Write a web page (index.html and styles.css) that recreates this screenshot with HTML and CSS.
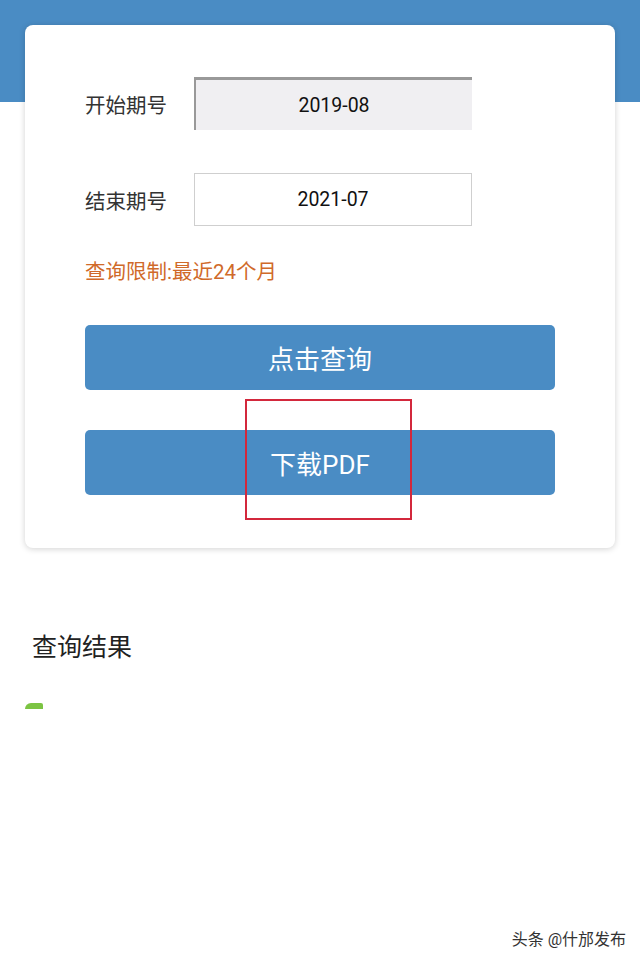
FILE: index.html
```html
<!DOCTYPE html>
<html lang="zh-CN">
<head>
    <meta charset="UTF-8">
    <meta name="viewport" content="width=device-width, initial-scale=1.0">
    <title>查询</title>
    <link rel="stylesheet" href="styles.css">
</head>
<body>
    <div class="header"></div>
    <div class="card">
        <div class="row">
            <label for="start">开始期号</label>
            <input type="text" id="start" class="field field-locked" value="2019-08" readonly>
        </div>
        <div class="row">
            <label for="end">结束期号</label>
            <input type="text" id="end" class="field" value="2021-07">
        </div>
        <p class="limit">查询限制:最近24个月</p>
        <button class="btn">点击查询</button>
        <button class="btn btn-pdf">下载PDF</button>
        <div class="mark"></div>
    </div>

    <h2 class="result-title">查询结果</h2>
    <div class="result-bar"></div>

    <div class="watermark">头条 @什邡发布</div>
</body>
</html>
```

FILE: styles.css
```css
body {
    font-family: Roboto, "Noto Sans CJK SC", sans-serif;
    background-color: #ffffff;
    margin: 0;
    width: 640px;
    height: 962px;
    position: relative;
    overflow: hidden;
}
.header {
    height: 102px;
    background-color: #4a8cc4;
}
.card {
    position: relative;
    margin: -77px 25px 0 25px;
    padding: 52px 60px 53px 60px;
    background-color: #fff;
    border-radius: 8px;
    box-shadow: 0 1px 6px rgba(0, 0, 0, 0.18);
}
.row {
    display: flex;
    align-items: center;
    margin-bottom: 43px;
}
.row label {
    width: 109px;
    font-size: 20.5px;
    color: #333;
}
.field {
    box-sizing: border-box;
    width: 278px;
    height: 53px;
    border: 1px solid #cfcfcf;
    background-color: #fff;
    font-family: Roboto, "Noto Sans CJK SC", sans-serif;
    font-size: 19.5px;
    color: #111;
    text-align: center;
    padding: 0;
    outline: none;
}
.field-locked {
    background-color: #f0eff2;
    border: none;
    border-top: 3px solid #999;
    border-left: 2px solid #999;
}
.limit {
    margin: -11px 0 0 0;
    font-size: 20.5px;
    line-height: 28px;
    color: #d06a2a;
}
.btn {
    display: block;
    width: 100%;
    height: 65px;
    margin-top: 39px;
    border: none;
    border-radius: 5px;
    background-color: #4a8cc4;
    color: #fff;
    font-family: Roboto, "Noto Sans CJK SC", sans-serif;
    font-size: 26px;
}
.btn-pdf {
    margin-top: 40px;
}
.mark {
    position: absolute;
    left: 220px;
    top: 374px;
    width: 163px;
    height: 117px;
    border: 2px solid #d3283c;
}
.result-title {
    margin: 84px 0 0 32px;
    font-size: 25px;
    font-weight: normal;
    line-height: 32px;
    color: #222;
}
.result-bar {
    width: 18px;
    height: 6px;
    margin: 39px 0 0 25px;
    background-color: #7cc443;
    border-radius: 6px 2px 0 0;
}
.watermark {
    position: absolute;
    right: 14px;
    bottom: 12px;
    font-size: 16px;
    color: #333;
    text-shadow: 0 0 2px #fff;
}
```
